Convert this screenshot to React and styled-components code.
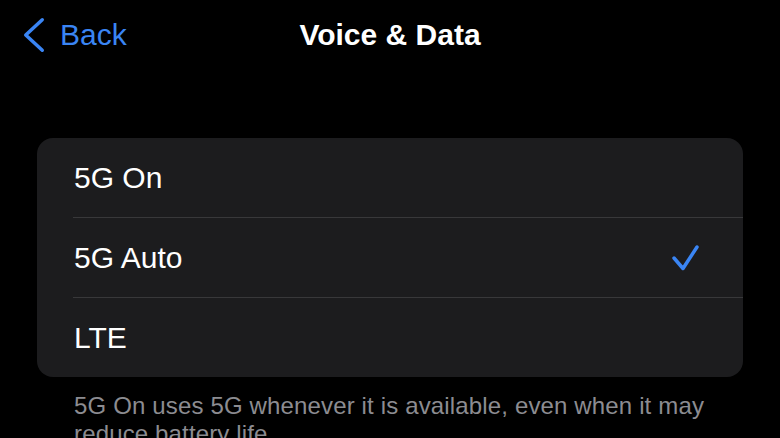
import React from "react";
import styled, { createGlobalStyle } from "styled-components";

const Global = createGlobalStyle`
  html, body { margin: 0; padding: 0; background: #000; }
  body { font-family: "Liberation Sans", Arial, sans-serif; overflow: hidden; }
`;

const Page = styled.div`
  width: 780px;
  height: 438px;
  background: #000;
  overflow: hidden;
`;

const NavBar = styled.div`
  height: 70px;
  display: grid;
  grid-template-columns: 1fr auto 1fr;
  align-items: center;
`;

const BackButton = styled.div`
  display: flex;
  align-items: center;
  gap: 14px;
  padding-left: 22px;
  color: #3a85f4;
  font-size: 30px;
`;

const Title = styled.div`
  color: #fff;
  font-size: 30px;
  font-weight: 700;
`;

const Card = styled.div`
  margin: 68px 37px 0 37px;
  background: #1c1c1e;
  border-radius: 16px;
  overflow: hidden;
`;

const Row = styled.div`
  height: 80px;
  display: flex;
  align-items: center;
  justify-content: space-between;
  padding-left: 37px;
  padding-right: 42px;
  position: relative;
  color: #fff;
  font-size: 30px;
  &:not(:last-child)::after {
    content: "";
    position: absolute;
    left: 36px;
    right: 0;
    bottom: 0;
    height: 1px;
    background: #38383a;
  }
  &:last-child { height: 79px; }
`;

const Footer = styled.p`
  margin: 15px 0 0 0;
  padding: 0 60px 0 74px;
  color: #8c8c91;
  font-size: 24px;
  letter-spacing: 0.15px;
  line-height: 28px;
`;

const Chevron = () => (
  <svg width="24" height="38" viewBox="0 0 24 38" fill="none">
    <path d="M20.25 3.75 L3.75 19 L20.25 34.25" stroke="#3a85f4" strokeWidth="3.5" strokeLinecap="round" strokeLinejoin="round" />
  </svg>
);

const Check = () => (
  <svg width="30" height="30" viewBox="0 0 30 30" fill="none">
    <path d="M3 15 L12 25.5 L26 4" stroke="#3a85f4" strokeWidth="3.5" strokeLinecap="round" strokeLinejoin="round" />
  </svg>
);

const options = [
  { label: "5G On", checked: false },
  { label: "5G Auto", checked: true },
  { label: "LTE", checked: false },
];

export default function App() {
  return (
    <Page>
      <Global />
      <NavBar>
        <BackButton>
          <Chevron />
          <span>Back</span>
        </BackButton>
        <Title>Voice &amp; Data</Title>
        <div />
      </NavBar>
      <Card>
        {options.map((o) => (
          <Row key={o.label}>
            <span>{o.label}</span>
            {o.checked && <Check />}
          </Row>
        ))}
      </Card>
      <Footer>
        5G On uses 5G whenever it is available, even when it may reduce battery life.
      </Footer>
    </Page>
  );
}
